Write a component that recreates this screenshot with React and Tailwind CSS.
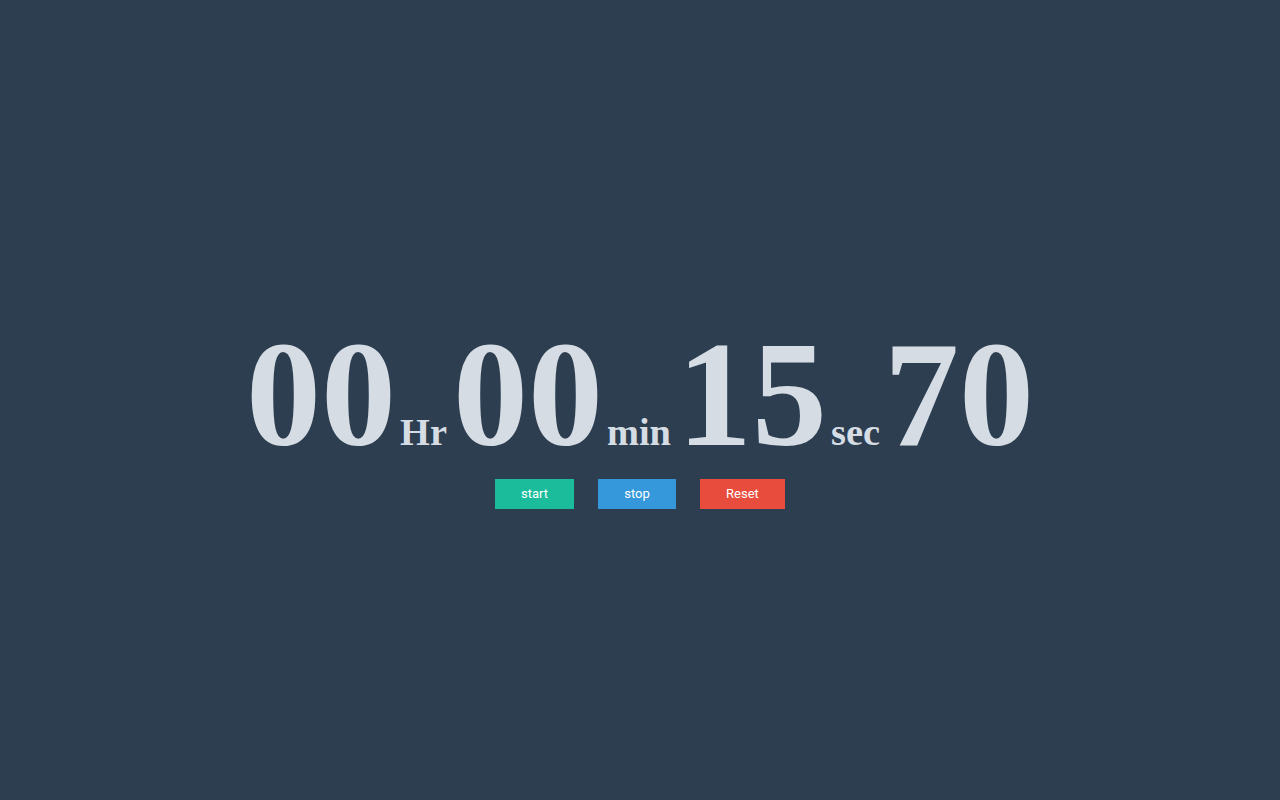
export default function App() {
  const big = "text-[150px] leading-[150px]";
  const small = "text-[38.4px] leading-[38px]";
  return (
    <div className="min-h-screen w-full bg-[#2c3e50] pt-[319px]" style={{ fontFamily: '"Liberation Serif", "Times New Roman", serif' }}>
      <div className="flex items-baseline justify-center font-bold text-[#d5dce3]">
        <span className={big}>00</span>
        <span className={`${small} ml-[4px] mr-[6px]`}>Hr</span>
        <span className={big}>00</span>
        <span className={`${small} ml-[4px] mr-[6px]`}>min</span>
        <span className={big}>15</span>
        <span className={`${small} ml-[4px] mr-[4px]`}>sec</span>
        <span className={big}>70</span>
      </div>
      <div className="mt-[10px] flex justify-center gap-[24px]" style={{ fontFamily: 'Roboto, "Noto Sans", sans-serif' }}>
        <button className="h-[30px] w-[79px] bg-[#1abc9c] text-[13px] leading-[30px] text-white">start</button>
        <button className="h-[30px] w-[78px] bg-[#3498db] text-[13px] leading-[30px] text-white">stop</button>
        <button className="h-[30px] w-[85px] bg-[#e74c3c] text-[13px] leading-[30px] text-white">Reset</button>
      </div>
    </div>
  );
}
